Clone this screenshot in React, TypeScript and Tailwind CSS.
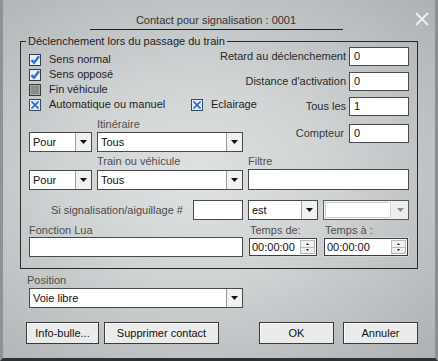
import React from "react";

type CheckKind = "tick" | "off" | "cross";

function CheckBox({ kind }: { kind: CheckKind }) {
  if (kind === "off") {
    return (
      <svg width="12" height="12" viewBox="0 0 12 12" className="shrink-0">
        <rect x="0.5" y="0.5" width="11" height="11" fill="#8a8b8c" stroke="#3a3a3a" />
        <rect x="1.5" y="1.5" width="9" height="9" fill="none" stroke="#a9aaab" />
      </svg>
    );
  }
  if (kind === "cross") {
    return (
      <svg width="12" height="12" viewBox="0 0 12 12" className="shrink-0">
        <rect x="0.5" y="0.5" width="11" height="11" fill="#d6e6f6" stroke="#34495f" />
        <path d="M3 3L9 9M9 3L3 9" stroke="#ffffff" strokeWidth="3.2" strokeLinecap="square" />
        <path d="M3 3L9 9M9 3L3 9" stroke="#2c6fce" strokeWidth="1.8" strokeLinecap="square" />
      </svg>
    );
  }
  return (
    <svg width="12" height="12" viewBox="0 0 12 12" className="shrink-0">
      <rect x="0.5" y="0.5" width="11" height="11" fill="#e6eef6" stroke="#3a3a3a" />
      <path d="M2.5 6L5 8.8L10 2.2" fill="none" stroke="#2d6fd0" strokeWidth="2.3" />
    </svg>
  );
}

function CheckRow({ kind, label }: { kind: CheckKind; label: string }) {
  return (
    <div className="flex h-[15px] items-center gap-[8px] whitespace-nowrap text-[#1e1e1e]">
      <CheckBox kind={kind} />
      <span>{label}</span>
    </div>
  );
}

function Arrow({ color = "#111" }: { color?: string }) {
  return (
    <svg width="7" height="4" viewBox="0 0 7 4">
      <path d="M0 0H7L3.5 4Z" fill={color} />
    </svg>
  );
}

function Select({ value, className = "" }: { value: string; className?: string }) {
  return (
    <div className={`flex h-[20px] border border-[#4a4a4a] bg-white ${className}`}>
      <div className="flex-1 pl-[3px] leading-[18px] text-[#111]">{value}</div>
      <div className="flex w-[16px] items-center justify-center border-l border-[#9c9c9c] bg-[#f1f1f1]">
        <Arrow />
      </div>
    </div>
  );
}

function DisabledSelect({ className = "" }: { className?: string }) {
  return (
    <div className={`flex h-[20px] border border-[#5a5a5a] bg-[#f4f4f4] ${className}`}>
      <div className="m-px flex-1 border border-[#cfcfcf] bg-white" />
      <div className="flex w-[16px] items-center justify-center bg-[#eeeeee]">
        <Arrow color="#8a8a8a" />
      </div>
    </div>
  );
}

function Field({ value = "", className = "" }: { value?: string; className?: string }) {
  return (
    <div className={`h-[19px] shrink-0 border border-[#4a4a4a] bg-white pl-[4px] leading-[17px] text-[#111] ${className}`}>
      {value}
    </div>
  );
}

function Spin({ className = "" }: { className?: string }) {
  return (
    <div className={`flex h-[20px] border border-[#d8d8d8] bg-white ${className}`}>
      <div className="flex flex-1 border border-[#3e3e3e]">
        <div className="flex-1 pl-[2px] leading-[16px] text-[#111]">00:00:00</div>
        <div className="my-px mr-px flex w-[15px] flex-col border border-[#b8b8b8] bg-[#f0f0f0]">
          <div className="flex flex-1 items-center justify-center border-b border-[#b8b8b8]">
            <svg width="3" height="2" viewBox="0 0 3 2">
              <path d="M1.5 0L3 2H0Z" fill="#222" />
            </svg>
          </div>
          <div className="flex flex-1 items-center justify-center">
            <svg width="3" height="2" viewBox="0 0 3 2">
              <path d="M0 0H3L1.5 2Z" fill="#222" />
            </svg>
          </div>
        </div>
      </div>
    </div>
  );
}

function Button({ label, className = "" }: { label: string; className?: string }) {
  return (
    <button
      type="button"
      className={`h-[22px] border border-[#3a3a3a] bg-[#ebebeb] text-center leading-[20px] text-[#111] shadow-[inset_1px_1px_0_#fafafa] ${className}`}
    >
      {label}
    </button>
  );
}

export default function App() {
  return (
    <div className="relative h-[361px] w-[438px] overflow-hidden border-b-[3px] border-l-[3px] border-r-[3px] border-b-[#2e3032] border-l-[#8f9294] border-r-[#8d9092] bg-[radial-gradient(ellipse_at_45%_50%,#dfe2e3_0%,#d0d3d4_40%,#aeb1b3_100%)] font-['Liberation_Sans',Arial,sans-serif] text-[11px] text-[#1e1e1e]">
      {/* title */}
      <div className="mx-auto mt-[14px] w-[253px] -translate-x-[3px] border-b border-[#1e1e1e] pb-[2px] text-center leading-[13px] text-[#333]">
        Contact pour signalisation : 0001
      </div>
      <svg
        width="14"
        height="14"
        viewBox="0 0 14 14"
        className="absolute left-[412px] top-[12px]"
        aria-label="Fermer"
      >
        <path d="M1 1L13 13M13 1L1 13" stroke="#eceeef" strokeWidth="2" />
      </svg>

      <fieldset className="ml-[17px] mt-[4px] w-[398px] border border-[#2a2a2a] pb-[11px] pl-[8px] pr-[8px]">
        <legend className="-ml-[3px] h-[14px] px-[2px] leading-[14px] text-[#1e1e1e]">
          Déclenchement lors du passage du train
        </legend>

        {/* checkboxes + delays */}
        <div className="-mt-px flex justify-between">
          <div className="flex w-[190px] shrink-0 flex-col pt-[5px]">
            <CheckRow kind="tick" label="Sens normal" />
            <CheckRow kind="tick" label="Sens opposé" />
            <CheckRow kind="off" label="Fin véhicule" />
            <div className="flex items-center">
              <div className="w-[162px] shrink-0">
                <CheckRow kind="cross" label="Automatique ou manuel" />
              </div>
              <CheckRow kind="cross" label="Eclairage" />
            </div>
          </div>
          <div className="flex shrink-0 flex-col gap-[6px] whitespace-nowrap text-[#2a2a2a]">
            <div className="flex items-center justify-end gap-[3px]">
              <span>Retard au déclenchement</span>
              <Field value="0" className="w-[60px]" />
            </div>
            <div className="flex items-center justify-end gap-[3px]">
              <span>Distance d'activation</span>
              <Field value="0" className="w-[60px]" />
            </div>
            <div className="flex items-center justify-end gap-[3px]">
              <span>Tous les</span>
              <Field value="1" className="w-[60px]" />
            </div>
          </div>
        </div>

        {/* itinéraire + compteur */}
        <div className="flex items-start justify-between">
          <div className="w-[214px]">
            <div className="h-[16px] pl-[68px] leading-[16px] text-[#4e4e4e]">Itinéraire</div>
            <div className="flex gap-[5px]">
              <Select value="Pour" className="w-[63px]" />
              <Select value="Tous" className="w-[146px]" />
            </div>
          </div>
          <div className="mt-[8px] flex items-center gap-[5px] text-[#3a3a3a]">
            <span>Compteur</span>
            <Field value="0" className="w-[60px]" />
          </div>
        </div>

        {/* train / filtre */}
        <div className="flex gap-[5px]">
          <div className="w-[214px]">
            <div className="h-[18px] pl-[68px] leading-[18px] text-[#4e4e4e]">Train ou véhicule</div>
            <div className="flex gap-[5px]">
              <Select value="Pour" className="w-[63px]" />
              <Select value="Tous" className="w-[146px]" />
            </div>
          </div>
          <div className="flex-1">
            <div className="h-[17px] leading-[18px] text-[#4e4e4e]">Filtre</div>
            <Field className="h-[21px] w-full" />
          </div>
        </div>

        {/* signalisation */}
        <div className="mt-[10px] flex items-center gap-[5px]">
          <div className="w-[159px] whitespace-nowrap pr-[5px] text-right text-[#4a4a4a]">
            Si signalisation/aiguillage #
          </div>
          <Field className="h-[20px] w-[50px]" />
          <Select value="est" className="w-[70px]" />
          <DisabledSelect className="flex-1" />
        </div>

        {/* lua + temps */}
        <div className="flex gap-[5px]">
          <div className="w-[214px]">
            <div className="h-[17px] leading-[20px] text-[#4e4e4e]">Fonction Lua</div>
            <Field className="h-[20px] w-full" />
          </div>
          <div className="w-[70px]">
            <div className="h-[17px] pl-[2px] leading-[20px] text-[#4e4e4e]">Temps de:</div>
            <Spin />
          </div>
          <div className="flex-1">
            <div className="h-[17px] pl-[2px] leading-[20px] text-[#4e4e4e]">Temps à :</div>
            <Spin />
          </div>
        </div>
      </fieldset>

      {/* position */}
      <div className="ml-[24px] mt-[4px] h-[15px] leading-[14px] text-[#4e4e4e]">Position</div>
      <Select value="Voie libre" className="ml-[26px] w-[214px]" />

      {/* buttons */}
      <div className="mt-[14px] flex pl-[23px] pr-[17px]">
        <Button label="Info-bulle..." className="w-[73px]" />
        <Button label="Supprimer contact" className="ml-[5px] w-[115px]" />
        <Button label="OK" className="ml-auto w-[75px]" />
        <Button label="Annuler" className="ml-[9px] w-[75px]" />
      </div>
    </div>
  );
}
